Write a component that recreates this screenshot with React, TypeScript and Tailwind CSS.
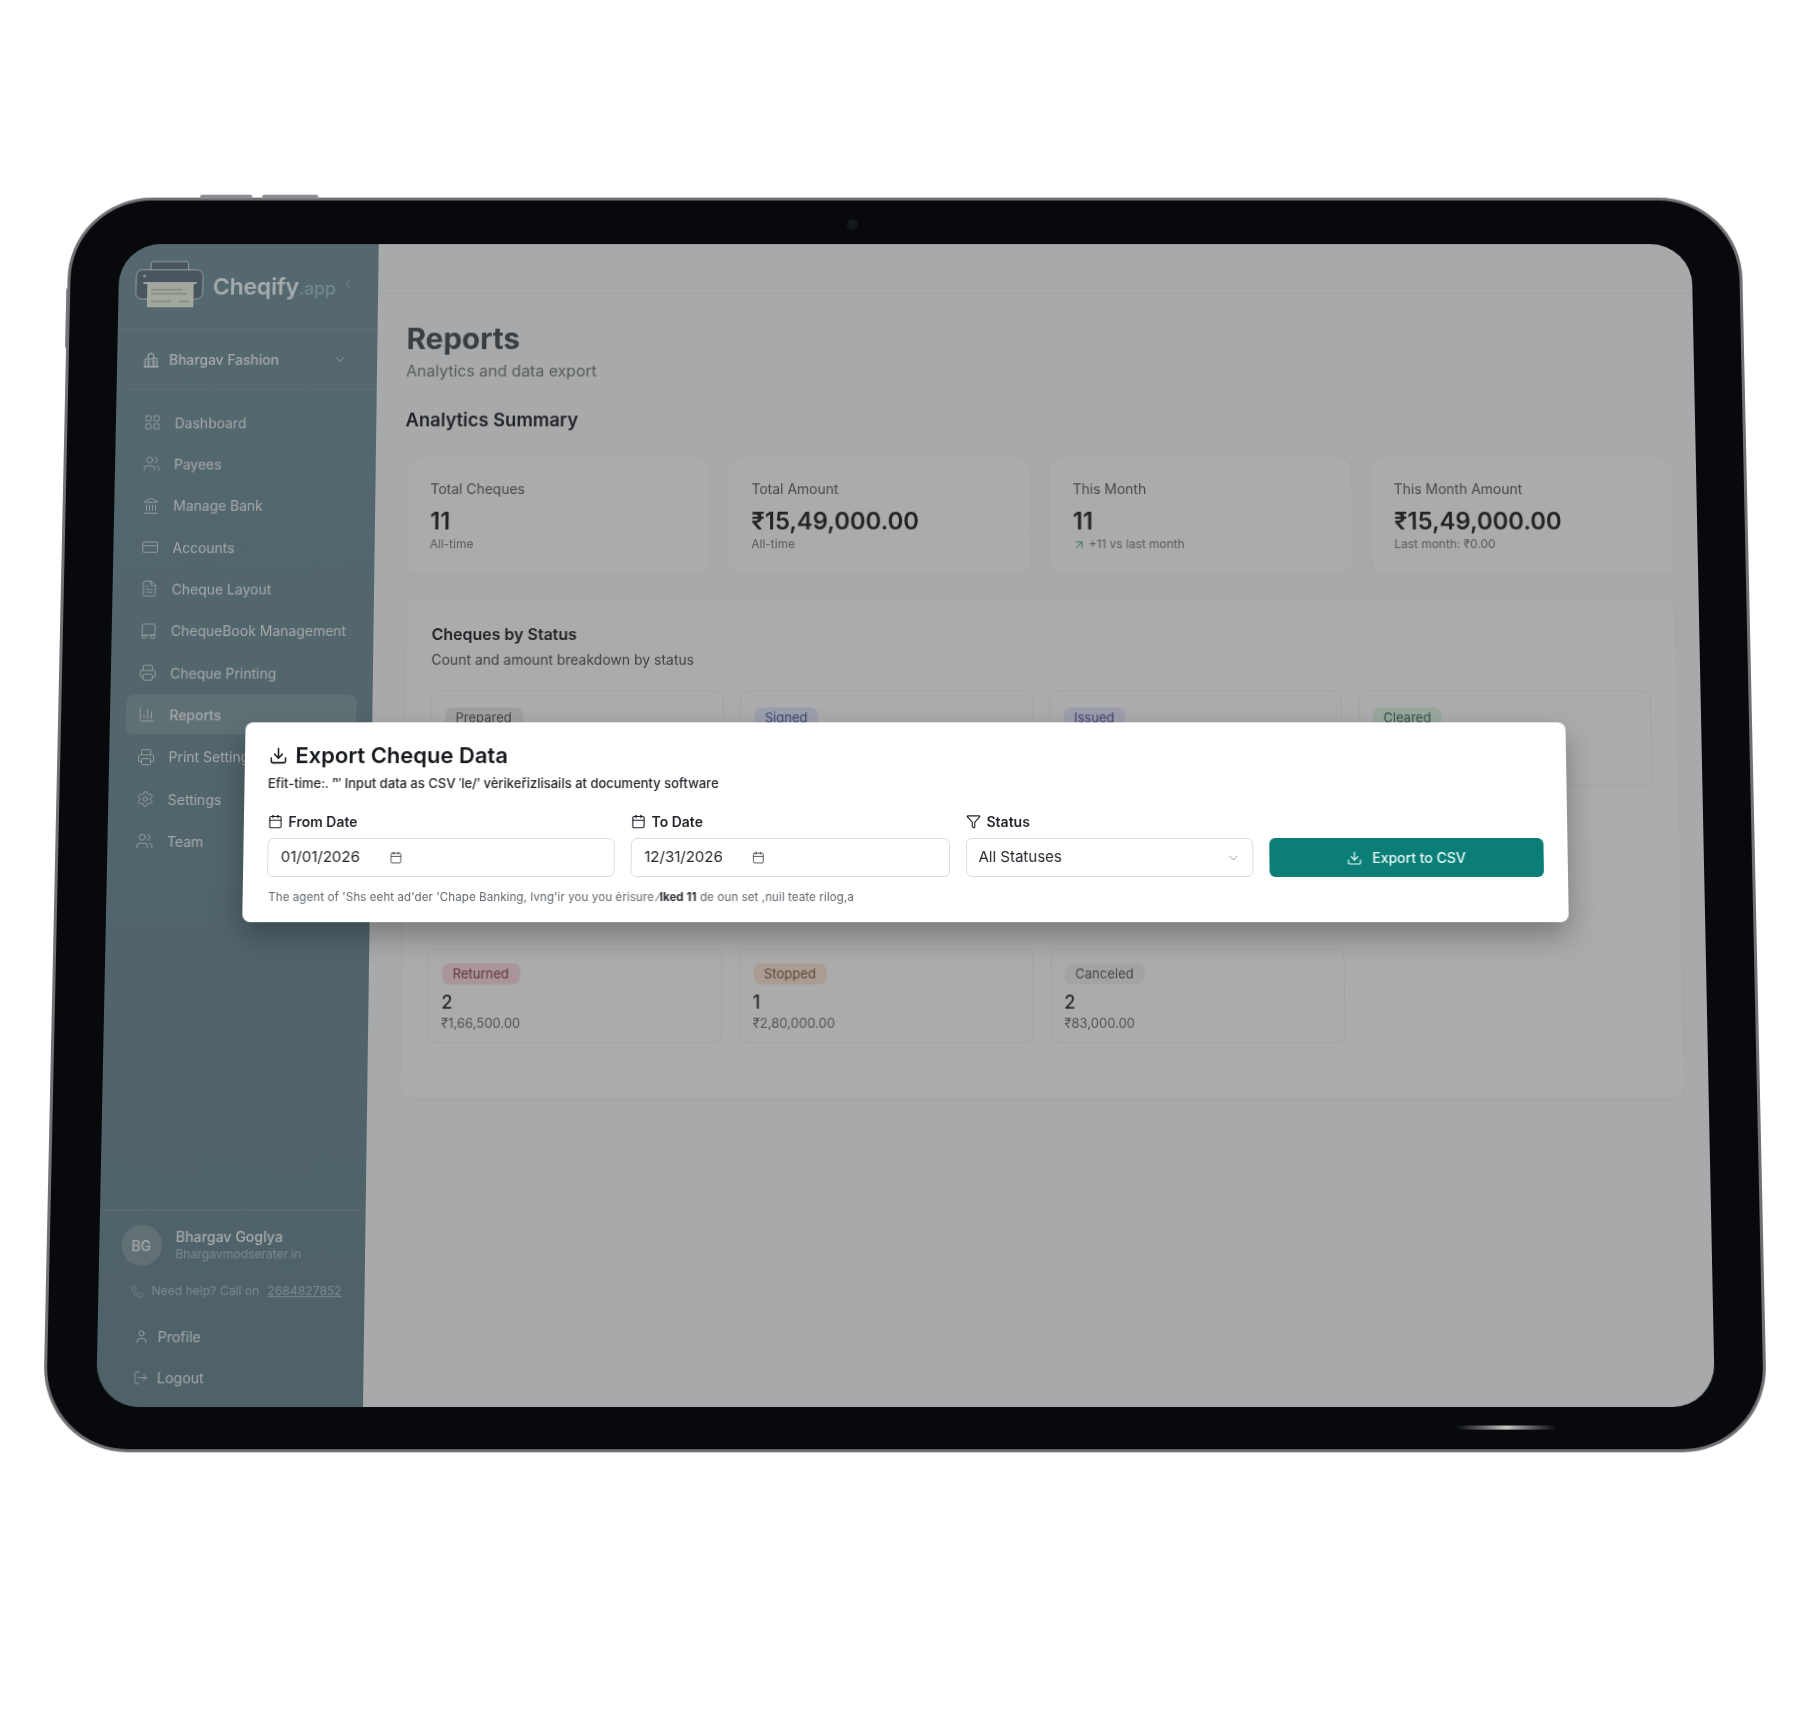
import React from "react";
import {
  LayoutGrid, Users, Landmark, CreditCard, FileText, Printer, ChartColumn, Settings,
  ChevronDown, ChevronLeft, Phone, User, LogOut, Download, Calendar, Funnel, ArrowUpRight,
} from "lucide-react";

function ChequeBookIcon({ size = 18, strokeWidth = 1.3, className = "" }: { size?: number; strokeWidth?: number; className?: string }) {
  return (
    <svg width={size} height={size} viewBox="0 0 24 24" fill="none" stroke="currentColor" strokeWidth={strokeWidth} strokeLinejoin="round" strokeLinecap="round" className={className}>
      <path d="M3.5 17V4a1.5 1.5 0 0 1 1.5-1.5h14A1.5 1.5 0 0 1 20.5 4v13" />
      <path d="M3.5 17.5h17" />
      <rect x="3.5" y="17.5" width="5.5" height="4" rx="0.6" />
      <rect x="15" y="17.5" width="5.5" height="4" rx="0.6" />
    </svg>
  );
}

function CompanyIcon() {
  return (
    <svg width="17" height="17" viewBox="0 0 16 16" fill="none" stroke="currentColor" strokeWidth="1.1" className="shrink-0 text-[#f0f6f7]">
      <path d="M1 15h14" strokeWidth="1.6" />
      <path d="M2 15V8l3-1.5V3.5L8 2l2 1.5V6l3.5 1.5V15" />
      <path d="M5 7.5h5M5 10h2M9 10h3M5 12.5h2M9 12.5h3M10 6v9M5 7v8" />
    </svg>
  );
}

const nav = [
  { label: "Dashboard", Icon: LayoutGrid },
  { label: "Payees", Icon: Users },
  { label: "Manage Bank", Icon: Landmark },
  { label: "Accounts", Icon: CreditCard },
  { label: "Cheque Layout", Icon: FileText },
  { label: "ChequeBook Management", Icon: ChequeBookIcon },
  { label: "Cheque Printing", Icon: Printer },
  { label: "Reports", Icon: ChartColumn, active: true },
  { label: "Print Settings", Icon: Printer },
  { label: "Settings", Icon: Settings },
  { label: "Team", Icon: Users },
];

function Logo() {
  return (
    <svg width="69" height="48" viewBox="0 0 69 48" fill="none" className="-mt-[5px] shrink-0">
      <rect x="15.5" y="1" width="38" height="12" rx="2" fill="#6d808b" stroke="#e4ecee" strokeWidth="1" />
      <rect x="0.7" y="9.5" width="67.5" height="30" rx="6" fill="#6d808b" stroke="#e4ecee" strokeWidth="1" />
      <rect x="8" y="22" width="54" height="2" fill="#f0f4f4" />
      <circle cx="9" cy="16" r="1.4" fill="#e4ecee" />
      <rect x="12" y="24" width="47" height="24" fill="#f4fbee" />
      <path d="M16 30h32M16 34h36M16 42h20M44 42h11" stroke="#9fb39c" strokeWidth="1.2" />
    </svg>
  );
}

function StatCard({ label, value, sub, up }: { label: string; value: string; sub: string; up?: boolean }) {
  return (
    <div className="h-[122px] rounded-xl border border-[#f6f6f6] bg-white px-[23px] pt-[23px]">
      <div className="text-[14px] leading-[20px] text-[#696c6f]">{label}</div>
      <div className="mt-[8px] text-[24px] font-semibold leading-[30px] text-[#33363a]">{value}</div>
      <div className="flex items-center gap-[3px] text-[12px] leading-[16px] text-[#84898c]">
        {up && <ArrowUpRight size={13} strokeWidth={1.6} className="text-[#3f9c6b]" />}
        {sub}
      </div>
    </div>
  );
}

function Tile({ badge, badgeClass, value, amount }: { badge: string; badgeClass: string; value?: string; amount?: string }) {
  return (
    <div className={`rounded-lg border border-[#f4f4f4] px-[13px] ${value ? "h-[94px] pt-[11px]" : "h-[96px] pt-[13px]"}`}>
      <span className={`inline-flex h-[21px] items-center rounded-[8px] px-[11px] text-[13px] leading-none ${badgeClass}`}>{badge}</span>
      {value && <div className="mt-[6px] text-[18px] font-medium leading-[24px] text-[#3a3c40]">{value}</div>}
      {amount && <div className="text-[13px] leading-[16px] text-[#7a7d80]">{amount}</div>}
    </div>
  );
}

function DateField({ label, value }: { label: string; value: string }) {
  return (
    <div>
      <div className="flex h-[18px] items-center gap-[6px] text-[14px] font-semibold text-[#1f2328]">
        <Calendar size={15} strokeWidth={1.8} />
        {label}
      </div>
      <div className="mt-[8px] flex h-[39px] items-center gap-[29px] rounded-[6px] border border-[#d9dde1] px-[13px] text-[15px] text-[#22262b]">
        <span>{value}</span>
        <Calendar size={13} strokeWidth={1.6} className="text-[#3d4248]" />
      </div>
    </div>
  );
}

export default function App() {
  return (
    <div className="flex h-[1725px] justify-center overflow-hidden bg-white pl-[10px] pt-[187px] [font-family:Inter,sans-serif]">
      <div className="relative h-[1256px] w-[1698px] shrink-0 rounded-[84px] border-[3px] border-[#707075] bg-[#07090c] px-[48.5px] pb-[41px] pt-[45px] blur-[0.35px] [transform:perspective(2000px)_rotateX(2.9deg)]">
        <div className="absolute -top-[6px] left-[130px] h-[4px] w-[53px] rounded-t-[2px] bg-[#8d8d93]" />
        <div className="absolute -top-[6px] left-[193px] h-[4px] w-[57px] rounded-t-[2px] bg-[#8d8d93]" />
        <div className="absolute -left-[4px] top-[90px] h-[62px] w-[2px] rounded-l-[2px] bg-[#77757c]" />
        <div className="absolute left-[787px] top-[19px] h-[11px] w-[11px] rounded-full bg-[#14171c]" />
        <div className="absolute left-[1388px] top-[1227px] h-[4px] w-[100px] rounded-full bg-gradient-to-r from-[#07090c] via-[#c9c9c9] to-[#07090c]" />

        <div className="relative flex h-full overflow-hidden rounded-[42px]">
          {/* Sidebar */}
          <aside className="flex w-[263px] shrink-0 flex-col bg-gradient-to-b from-[#7f9ca6] to-[#76929c] text-white">
            <div className="flex h-[88px] shrink-0 items-center border-b border-white/10 pl-[17px]">
              <Logo />
              <div className="ml-[10px] mt-[2px] flex items-baseline text-[23.3px] font-semibold tracking-[-0.2px] text-[#f7ffff]">
                Cheqify
                <span className="text-[18px] font-medium text-[#a7ced0]">.app</span>
              </div>
              <ChevronLeft size={14} strokeWidth={1.5} className="ml-[5px] -mt-[6px] text-[#c5dadd]" />
            </div>
            <div className="ml-[9px] flex h-[62px] shrink-0 items-center border-b border-white/10 pl-[17px] pr-[30px]">
              <CompanyIcon />
              <span className="ml-[10px] flex-1 text-[14px] font-medium text-[#f7fbfb]">Bhargav Fashion</span>
              <ChevronDown size={15} strokeWidth={1.5} className="text-[#e6eef0]" />
            </div>
            <nav className="flex flex-col gap-[2.35px] px-[16px] pt-[13px]">
              {nav.map(({ label, Icon, active }) => (
                <div key={label} className={`flex h-[40px] items-center gap-[14px] rounded-lg pl-[12px] text-[14px] ${active ? "bg-white/15 font-medium" : ""} text-[#f3f8f9]`}>
                  <Icon size={18} strokeWidth={1.3} className="shrink-0 text-[#dfe9ec]" />
                  {label}
                </div>
              ))}
            </nav>
            <div className="mt-auto border-t border-white/15 px-[22px] pt-[14px] pb-[9px]">
              <div className="flex items-center gap-[14px]">
                <div className="flex h-[40px] w-[40px] items-center justify-center rounded-full bg-white/20 text-[14px] font-medium text-[#f3f8f9]">BG</div>
                <div>
                  <div className="text-[14px] font-medium leading-[18px] text-[#f7fbfb]">Bhargav Goglya</div>
                  <div className="text-[12px] leading-[16px] text-[#b5cbd1]">Bhargavmodserater.in</div>
                </div>
              </div>
              <div className="mt-[16px] flex h-[18px] items-center gap-[8px] pl-[10px] text-[12px] text-[#b5cbd1]">
                <Phone size={13} strokeWidth={1.3} />
                <span>Need help? Call on</span>
                <span className="underline">2684827852</span>
              </div>
              <div className="mt-[15px] flex h-[40px] items-center gap-[9px] pl-[14px] text-[14px] text-[#eef5f6]">
                <User size={15} strokeWidth={1.4} />
                Profile
              </div>
              <div className="flex h-[40px] items-center gap-[9px] pl-[14px] text-[14px] text-[#eef5f6]">
                <LogOut size={15} strokeWidth={1.3} />
                Logout
              </div>
            </div>
          </aside>

          {/* Main */}
          <main className="flex-1 bg-[#f9fdfe] pl-[30px] pr-[32px]">
            <div className="-ml-[30px] -mr-[32px] h-[51px] border-b border-[#f1f4f4]" />
            <h1 className="mt-[28px] text-[30px] font-bold leading-[36px] text-[#575c62]">Reports</h1>
            <p className="mt-[3px] text-[16px] leading-[24px] text-[#85888b]">Analytics and data export</p>
            <h2 className="mt-[24px] text-[18.5px] font-semibold leading-[28px] text-[#33353a]">Analytics Summary</h2>
            <div className="ml-[2px] mt-[23px] grid grid-cols-4 gap-[18px]">
              <StatCard label="Total Cheques" value="11" sub="All-time" />
              <StatCard label="Total Amount" value="₹15,49,000.00" sub="All-time" />
              <StatCard label="This Month" value="11" sub="+11 vs last month" up />
              <StatCard label="This Month Amount" value="₹15,49,000.00" sub="Last month: ₹0.00" />
            </div>
            <section className="ml-[2px] mt-[23px] h-[501px] rounded-xl border border-[#f6f6f6] bg-white px-[26px] pt-[23px]">
              <h3 className="text-[16px] font-semibold leading-[24px] text-[#33353a]">Cheques by Status</h3>
              <p className="mt-[4px] text-[14px] leading-[20px] text-[#5d6063]">Count and amount breakdown by status</p>
              <div className="mt-[21px] grid grid-cols-[repeat(4,293px)] gap-x-[17px] gap-y-[162px]">
                <Tile badge="Prepared" badgeClass="bg-[#eceef1] text-[#69696b]" />
                <Tile badge="Signed" badgeClass="bg-[#e8eeff] text-[#5865b0]" />
                <Tile badge="Issued" badgeClass="bg-[#eaecff] text-[#5a60ac]" />
                <Tile badge="Cleared" badgeClass="bg-[#e2f9e8] text-[#4a7a60]" />
                <Tile badge="Returned" badgeClass="bg-[#fcdfe6] text-[#93505c]" value="2" amount="₹1,66,500.00" />
                <Tile badge="Stopped" badgeClass="bg-[#ffe9dc] text-[#8e6852]" value="1" amount="₹2,80,000.00" />
                <Tile badge="Canceled" badgeClass="bg-[#f3f3f3] text-[#6a6a6a]" value="2" amount="₹83,000.00" />
              </div>
            </section>
          </main>

          {/* Dim + modal */}
          <div className="absolute inset-0 flex items-center justify-center bg-black/[.33] pt-[10px]">
            <div className="h-[200px] w-[1323px] rounded-lg bg-white px-[24px] pt-[19px] shadow-[0_14px_28px_rgba(0,0,0,0.28)]">
              <div className="flex h-[28px] items-center gap-[8px] text-[22px] font-semibold text-[#14171b]">
                <Download size={19} strokeWidth={1.9} />
                Export Cheque Data
              </div>
              <p className="mt-[5px] text-[13px] font-medium leading-[18px] text-[#23272c]">
                Efit-time:. ⁿ′ Input data as CSV ˈle/′ vèrikeřizlisails at documenty software
              </p>
              <div className="mt-[20px] grid grid-cols-[347px_319px_287px_1fr] gap-x-[16px]">
                <DateField label="From Date" value="01/01/2026" />
                <DateField label="To Date" value="12/31/2026" />
                <div>
                  <div className="flex h-[18px] items-center gap-[6px] text-[14px] font-semibold text-[#1f2328]">
                    <Funnel size={15} strokeWidth={1.8} />
                    Status
                  </div>
                  <div className="mt-[8px] flex h-[39px] items-center justify-between rounded-[6px] border border-[#d9dde1] pl-[12px] pr-[12px] text-[15px] text-[#22262b]">
                    All Statuses
                    <ChevronDown size={14} strokeWidth={1.5} className="text-[#7d8288]" />
                  </div>
                </div>
                <div className="mt-[26px] flex h-[39px] items-center justify-center gap-[10px] rounded-[6px] bg-[#0c7e78] text-[14px] font-medium text-[#e6fbf7]">
                  <Download size={16} strokeWidth={1.8} />
                  Export to CSV
                </div>
              </div>
              <p className="mt-[12px] pl-[2px] text-[11.5px] leading-[16px] tracking-[0.1px] text-[#5f656b]">
                The agent of 'Shs eeht ad'der 'Chape Banking, lvng'ir you you ėrisure ⁄<b className="text-[#2b2f34]">lked 11</b> de oun set ,nuil teate rilog,a
              </p>
            </div>
          </div>
        </div>
      </div>
    </div>
  );
}
